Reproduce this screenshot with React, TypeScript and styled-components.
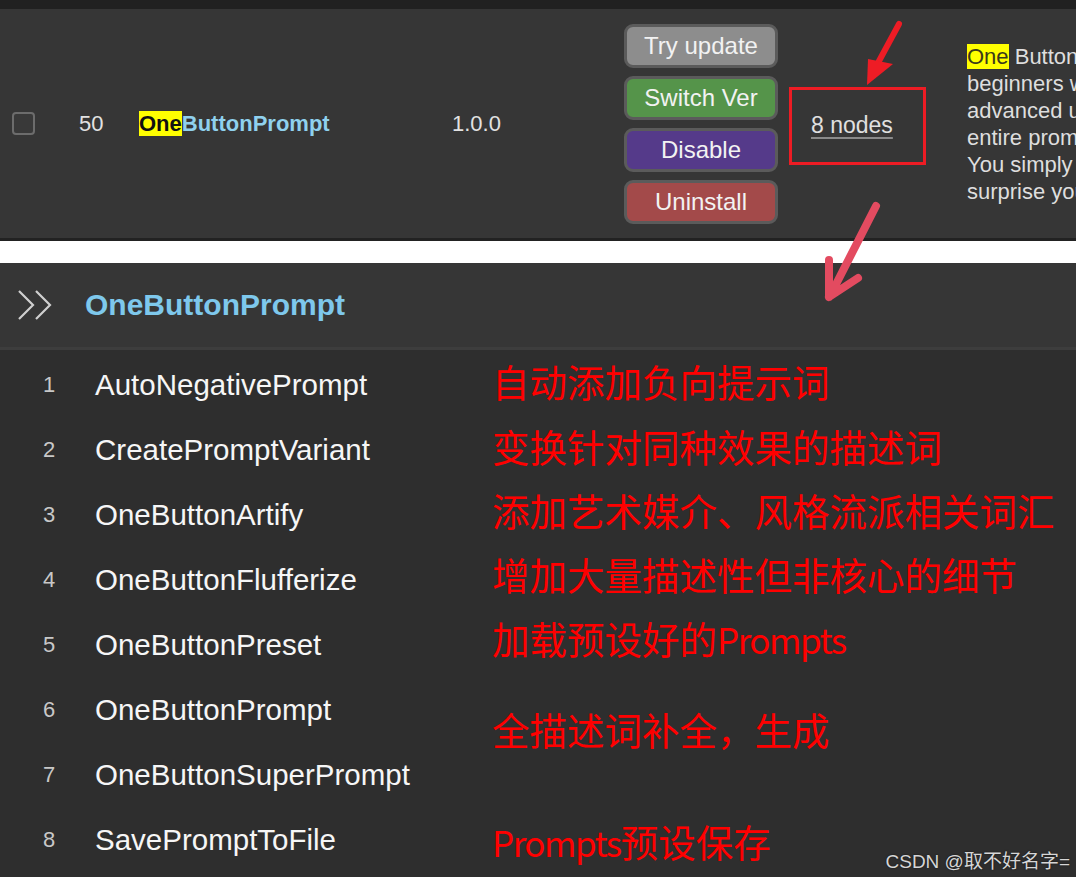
import styled, { createGlobalStyle } from "styled-components"

const GlobalStyle = createGlobalStyle`
  html, body {
    margin: 0;
    padding: 0;
    background: #ffffff;
  }
  body {
    font-family: Arial, "Liberation Sans", sans-serif;
  }
`

// note text: latin runs are split out so they can be narrowed like the original font
const nodes = [
  { name: "AutoNegativePrompt", note: ["自动添加负向提示词"], shift: -4 },
  { name: "CreatePromptVariant", note: ["变换针对同种效果的描述词"], shift: -4 },
  { name: "OneButtonArtify", note: ["添加艺术媒介、风格流派相关词汇"], shift: -5 },
  { name: "OneButtonFlufferize", note: ["增加大量描述性但非核心的细节"], shift: -6 },
  { name: "OneButtonPreset", note: ["加载预设好的", "Prompts"], shift: -7 },
  { name: "OneButtonPrompt", note: ["全描述词补全，生成"], shift: 19 },
  { name: "OneButtonSuperPrompt", note: [], shift: 0 },
  { name: "SavePromptToFile", note: ["", "Prompts", "预设保存"], shift: 1 },
]

const actions = [
  { label: "Try update", tone: "#8d8d8d" },
  { label: "Switch Ver", tone: "#55944a" },
  { label: "Disable", tone: "#553a8a" },
  { label: "Uninstall", tone: "#a34a4a" },
]

export default function App() {
  return (
    <Page>
      <GlobalStyle />
      <TopStrip />
      <PackRow>
        <CheckCell>
          <Checkbox />
        </CheckCell>
        <IndexCell>50</IndexCell>
        <TitleCell>
          <Mark>One</Mark>ButtonPrompt
        </TitleCell>
        <VersionCell>1.0.0</VersionCell>
        <ActionCell>
          {actions.map(a => (
            <ActionButton key={a.label} $tone={a.tone}>
              {a.label}
            </ActionButton>
          ))}
        </ActionCell>
        <NodesCell>
          <NodesBox>
            <NodesLink>8 nodes</NodesLink>
          </NodesBox>
        </NodesCell>
        <Description>
          <DescMark>One</DescMark> Button Prompt is a tool/script for automatic1111 for
          <br />
          beginners who have problems writing a good prompt, or
          <br />
          advanced users who want to get inspired. It generates an
          <br />
          entire prompt from scratch. It is random, but controlled.
          <br />
          You simply load up the script and press generate, and let it
          <br />
          surprise you.
        </Description>
      </PackRow>
      <WhiteBand />
      <NodeHeader>
        <Chevrons viewBox="0 0 36 32">
          <path d="M1 2 L15 16 L1 30 M18 2 L32 16 L18 30" />
        </Chevrons>
        <PackTitle>OneButtonPrompt</PackTitle>
      </NodeHeader>
      <NodeList>
        {nodes.map((n, i) => (
          <NodeRow key={n.name}>
            <NodeIndex>{i + 1}</NodeIndex>
            <NodeName>{n.name}</NodeName>
            <Note style={{ transform: `translateY(${n.shift}px)` }}>
              {n.note.map((part, j) =>
                j % 2 === 1 ? <Latin key={j}>{part}</Latin> : <span key={j}>{part}</span>
              )}
            </Note>
          </NodeRow>
        ))}
      </NodeList>
      <Arrows viewBox="0 0 1076 877">
        <path
          d="M899 24 L872 74"
          stroke="#ee1c25"
          strokeWidth="6"
          strokeLinecap="round"
          fill="none"
        />
        <polygon points="867,85 868,59 893,64" fill="#ee1c25" />
        <path
          d="M876 206 L830 296 M829 297 L829 260 M829 297 L858 278"
          stroke="#e34b60"
          strokeWidth="8"
          strokeLinecap="round"
          strokeLinejoin="round"
          fill="none"
        />
      </Arrows>
      <Watermark>CSDN @取不好名字=</Watermark>
    </Page>
  )
}

const Page = styled.div`
  position: relative;
  width: 1076px;
  height: 877px;
  overflow: hidden;
  background: #2e2e2e;
`

const TopStrip = styled.div`
  height: 9px;
  background: #212121;
`

const PackRow = styled.div`
  display: flex;
  align-items: center;
  height: 229px;
  background: #363636;
  border-bottom: 3px solid #222222;
  color: #e2e2e2;
  font-size: 22px;
`

const CheckCell = styled.div`
  width: 67px;
  padding-left: 12px;
  display: flex;
  align-items: center;
`

const Checkbox = styled.div`
  width: 19px;
  height: 19px;
  border: 2px solid #6c6c6c;
  border-radius: 4px;
  background: #393939;
`

const IndexCell = styled.div`
  width: 60px;
`

const TitleCell = styled.div`
  width: 313px;
  font-weight: bold;
  color: #8fd1ee;
`

const Mark = styled.span`
  background: #ffff00;
  color: #111111;
`

const VersionCell = styled.div`
  width: 172px;
`

const ActionCell = styled.div`
  width: 165px;
  display: flex;
  flex-direction: column;
  gap: 8px;
`

const ActionButton = styled.div<{ $tone: string }>`
  box-sizing: border-box;
  width: 154px;
  height: 44px;
  display: flex;
  align-items: center;
  justify-content: center;
  border: 3px solid #5b5b5b;
  border-radius: 9px;
  background: ${p => p.$tone};
  color: #f2f2f2;
  font-size: 24px;
`

const NodesCell = styled.div`
  width: 178px;
`

const NodesBox = styled.div`
  box-sizing: border-box;
  width: 137px;
  height: 78px;
  margin-top: 4px;
  padding-left: 19px;
  display: flex;
  align-items: center;
  border: 3px solid #ed1c24;
`

const NodesLink = styled.span`
  font-size: 23px;
  color: #e0e0e0;
  text-decoration: underline;
  text-decoration-color: #8a8a8a;
  text-decoration-thickness: 2px;
  text-underline-offset: 4px;
`

const Description = styled.div`
  flex: 1;
  overflow: hidden;
  white-space: nowrap;
  font-size: 22px;
  line-height: 27px;
  color: #dedede;
`

const DescMark = styled.span`
  background: #ffff00;
  color: #3a3a1a;
`

const WhiteBand = styled.div`
  height: 22px;
  background: #ffffff;
`

const NodeHeader = styled.div`
  height: 84px;
  display: flex;
  align-items: center;
  gap: 31px;
  padding-left: 18px;
  background: #363636;
  border-bottom: 3px solid #3d3d3d;
`

const Chevrons = styled.svg`
  width: 36px;
  height: 32px;
  stroke: #cfcfcf;
  stroke-width: 2.2;
  fill: none;
`

const PackTitle = styled.div`
  font-size: 30px;
  font-weight: bold;
  color: #7ec8ec;
`

const NodeList = styled.div`
  padding-top: 2px;
`

const NodeRow = styled.div`
  display: grid;
  grid-template-columns: 36px 369px 1fr;
  column-gap: 28px;
  align-items: center;
  height: 65px;
  padding-left: 31px;
`

const NodeIndex = styled.div`
  text-align: center;
  font-size: 22px;
  color: #c8c8c8;
`

const NodeName = styled.div`
  font-size: 29.5px;
  color: #f6f6f6;
  white-space: nowrap;
`

const Note = styled.div`
  font-family: "Noto Sans CJK SC", "Noto Sans", sans-serif;
  font-size: 37.5px;
  line-height: 1;
  color: #ff0000;
  white-space: nowrap;
`

const Latin = styled.span`
  font-size: 35px;
  letter-spacing: -1.5px;
`

const Arrows = styled.svg`
  position: absolute;
  inset: 0;
  width: 1076px;
  height: 877px;
  pointer-events: none;
`

const Watermark = styled.div`
  position: absolute;
  right: 6px;
  bottom: 4px;
  font-size: 19px;
  font-family: Arial, "Liberation Sans", "Noto Sans CJK SC", sans-serif;
  color: #d6d6d6;
  text-shadow: 0 0 2px rgba(0, 0, 0, 0.6);
`
